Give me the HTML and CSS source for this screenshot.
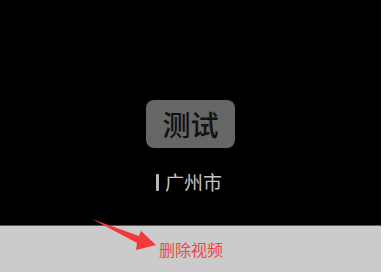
FILE: index.html
```html
<!DOCTYPE html>
<html lang="zh">
<head>
<meta charset="utf-8">
<link rel="stylesheet" href="styles.css">
</head>
<body>
<div class="screen">
  <div class="video">
    <div class="badge">测试</div>
    <div class="loc"><span class="cursor"></span><span class="city">广州市</span></div>
  </div>
  <div class="sheet">
    <div class="delete">删除视频</div>
  </div>
  <svg class="arrow" width="384" height="272" viewBox="0 0 384 272">
    <polygon points="92,219 139,236 141,231 156,245 136,250 137,243" fill="#f23a3a"/>
  </svg>
</div>
</body>
</html>
```
FILE: styles.css
```css
html, body {
  margin: 0;
  padding: 0;
  background: #ffffff;
}
body {
  width: 384px;
  height: 272px;
  overflow: hidden;
  font-family: "Noto Sans CJK SC", "Noto Sans", sans-serif;
}
.screen {
  position: relative;
  width: 381px;
  height: 272px;
  display: flex;
  flex-direction: column;
}
.video {
  height: 225px;
  background: #000000;
  display: flex;
  flex-direction: column;
  align-items: center;
  padding-top: 100px;
  box-sizing: border-box;
}
.badge {
  width: 89px;
  height: 48px;
  border-radius: 8px;
  background: #666666;
  color: #111111;
  font-size: 28px;
  font-weight: 500;
  line-height: 48px;
  text-align: center;
}
.loc {
  margin-top: 22px;
  display: flex;
  align-items: center;
  gap: 6px;
  height: 24px;
  margin-right: 3px;
}
.cursor {
  width: 3px;
  height: 17px;
  background: #b8b8b8;
  border-radius: 1px;
}
.city {
  color: #c4c4c4;
  font-size: 19px;
  line-height: 24px;
}
.sheet {
  flex: 1;
  background: #cbcbcb;
  border-top: 1px solid #5a5a5a;
  display: flex;
  justify-content: center;
  padding-top: 12px;
  box-sizing: border-box;
}
.delete {
  color: #e9494b;
  font-size: 16px;
  line-height: 22px;
  margin-left: 1px;
}
.arrow {
  position: absolute;
  left: 0;
  top: 0;
  pointer-events: none;
}
```
